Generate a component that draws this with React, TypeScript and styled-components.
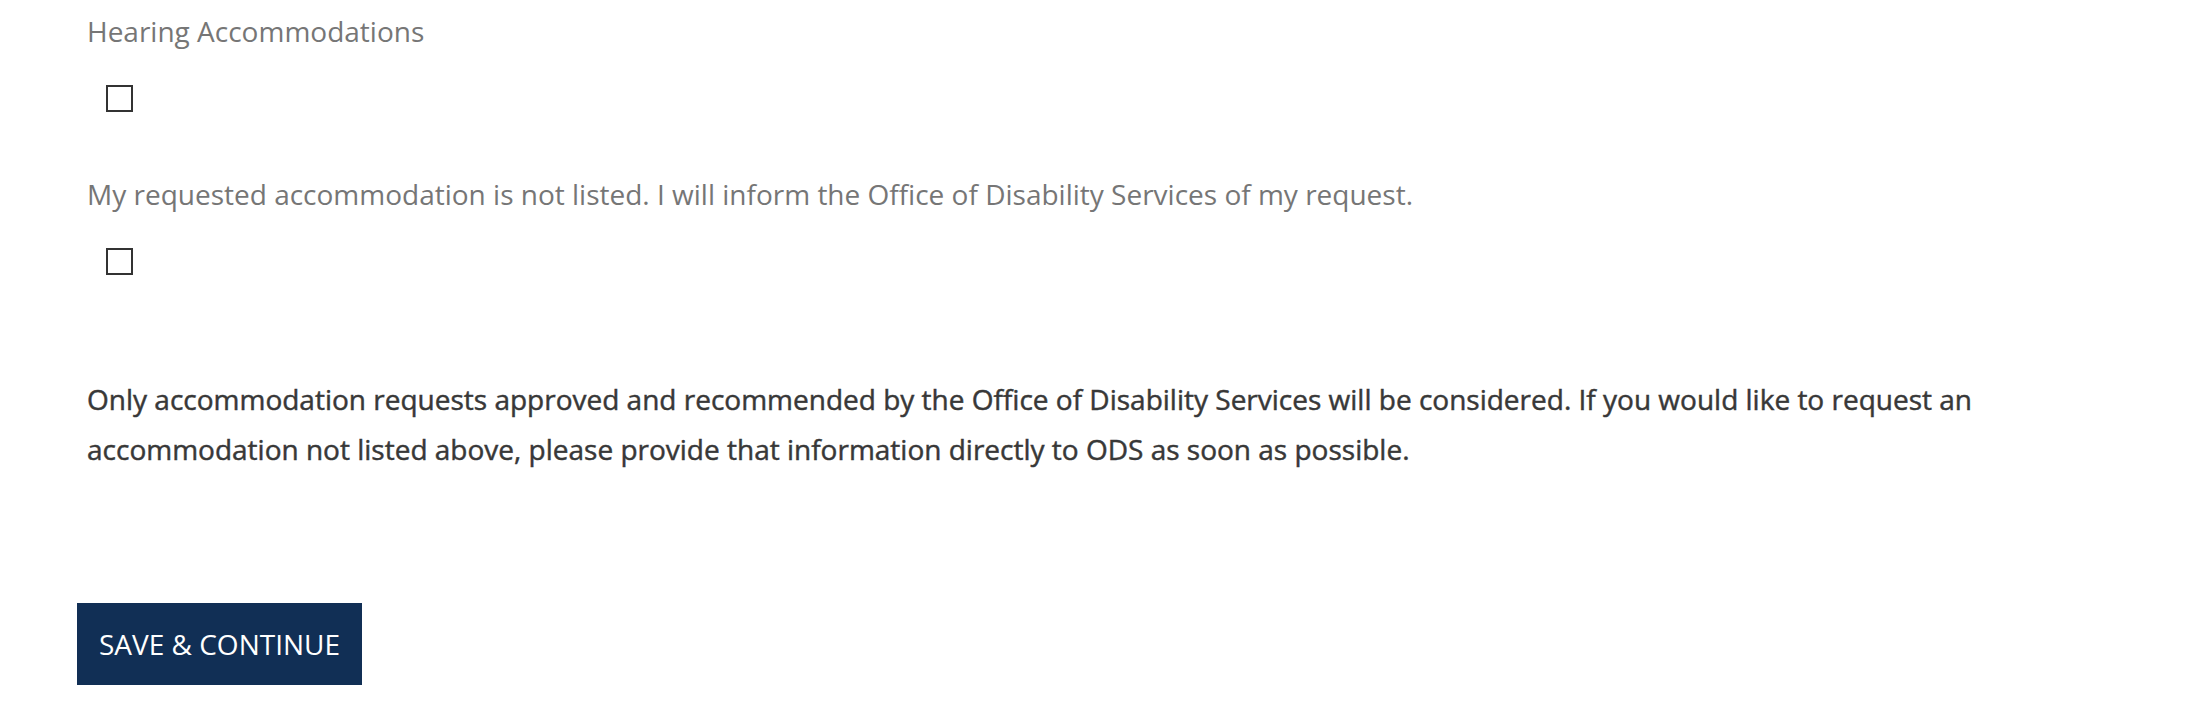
import React, { useState } from "react";
import styled, { createGlobalStyle } from "styled-components";

const GlobalStyle = createGlobalStyle`
  html, body {
    margin: 0;
    padding: 0;
    background: #ffffff;
  }
  body {
    font-family: "Open Sans", "Noto Sans", sans-serif;
    color: #333333;
  }
`;

const Page = styled.main`
  display: flex;
  flex-direction: column;
  align-items: flex-start;
  padding: 12px 0 0 77px;
`;

const Field = styled.div<{ $top: number }>`
  display: flex;
  flex-direction: column;
  align-items: flex-start;
  padding-left: 10px;
  margin-top: ${(p) => p.$top}px;
`;

const FieldLabel = styled.label`
  display: block;
  font-size: 28px;
  line-height: 38px;
  font-weight: 400;
  color: #767676;
`;

const CheckRow = styled.div`
  display: flex;
  padding-left: 19px;
  margin-top: 35px;
`;

const Box = styled.button<{ $checked: boolean }>`
  width: 27px;
  height: 27px;
  box-sizing: border-box;
  border: 2px solid #333333;
  background: ${(p) => (p.$checked ? "#333333" : "#ffffff")};
  padding: 0;
  margin: 0;
  cursor: pointer;
  border-radius: 0;
`;

const Notice = styled.p`
  margin: 99px 0 0 10px;
  width: 1900px;
  font-size: 28px;
  line-height: 50px;
  font-weight: 400;
  color: #383838;
  -webkit-text-stroke: 0.45px #383838;
`;

const SaveButton = styled.button`
  margin-top: 129px;
  height: 82px;
  width: 285px;
  box-sizing: border-box;
  padding: 0;
  border: none;
  border-radius: 0;
  background: #112f55;
  color: #ffffff;
  font-family: "Open Sans", "Noto Sans", sans-serif;
  font-size: 28px;
  font-weight: 400;
  cursor: pointer;
`;

function Check() {
  const [checked, setChecked] = useState(false);
  return (
    <CheckRow>
      <Box
        type="button"
        role="checkbox"
        aria-checked={checked}
        $checked={checked}
        onClick={() => setChecked(!checked)}
      />
    </CheckRow>
  );
}

export default function App() {
  return (
    <>
      <GlobalStyle />
      <Page>
        <Field $top={0}>
          <FieldLabel>Hearing Accommodations</FieldLabel>
          <Check />
        </Field>
        <Field $top={63}>
          <FieldLabel>
            My requested accommodation is not listed. I will inform the Office of Disability Services of my request.
          </FieldLabel>
          <Check />
        </Field>
        <Notice>
          Only accommodation requests approved and recommended by the Office of Disability Services will be considered. If you would like to request an accommodation not listed above, please provide that information directly to ODS as soon as possible.
        </Notice>
        <SaveButton type="button">SAVE &amp; CONTINUE</SaveButton>
      </Page>
    </>
  );
}
